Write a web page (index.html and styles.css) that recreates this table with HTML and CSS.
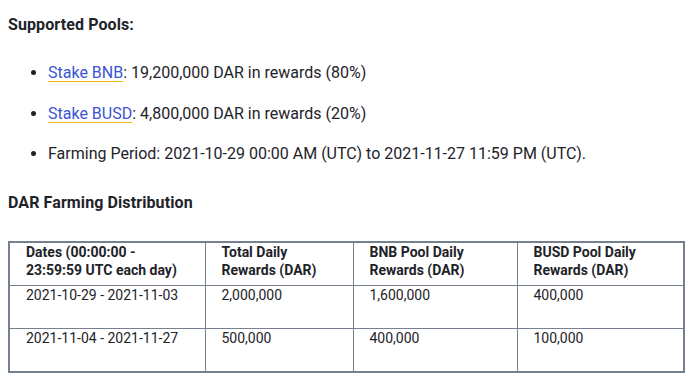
FILE: index.html
```html
<!DOCTYPE html>
<html>
<head>
<meta charset="utf-8">
<link rel="stylesheet" href="styles.css">
</head>
<body>
<div class="article">
  <p class="heading">Supported Pools:</p>
  <ul class="pools">
    <li><a class="link" href="#">Stake BNB</a>: 19,200,000 DAR in rewards (80%)</li>
    <li><a class="link" href="#">Stake BUSD</a>: 4,800,000 DAR in rewards (20%)</li>
    <li>Farming Period: 2021-10-29 00:00 AM (UTC) to 2021-11-27 11:59 PM (UTC).</li>
  </ul>
  <p class="heading heading-dist">DAR Farming Distribution</p>
  <table class="dist">
    <colgroup>
      <col class="c1"><col class="c2"><col class="c3"><col class="c4">
    </colgroup>
    <thead>
      <tr>
        <th>Dates (00:00:00 - 23:59:59 UTC each day)</th>
        <th>Total Daily Rewards (DAR)</th>
        <th>BNB Pool Daily Rewards (DAR)</th>
        <th>BUSD Pool Daily Rewards (DAR)</th>
      </tr>
    </thead>
    <tbody>
      <tr>
        <td>2021-10-29 - 2021-11-03</td>
        <td>2,000,000</td>
        <td>1,600,000</td>
        <td>400,000</td>
      </tr>
      <tr>
        <td>2021-11-04 - 2021-11-27</td>
        <td>500,000</td>
        <td>400,000</td>
        <td>100,000</td>
      </tr>
    </tbody>
  </table>
</div>
</body>
</html>
```

FILE: styles.css
```css
html, body {
  margin: 0;
  padding: 0;
  background: #ffffff;
}

.article {
  padding: 0 8px;
  font-family: Roboto, "Noto Sans", sans-serif;
  font-size: 16px;
  line-height: 24px;
  color: #1e2329;
}

.heading {
  margin: 13px 0 0;
  font-weight: 700;
  letter-spacing: 0.1px;
}

.pools {
  margin: 24px 0 0;
  padding-left: 40px;
}

.pools li {
  margin-bottom: 16.5px;
}

.pools li:last-child {
  margin-bottom: 0;
}

.link {
  color: #3a55d4;
  text-decoration: underline;
  text-decoration-color: #f0b90b;
  text-underline-offset: 3px;
  text-decoration-thickness: 1px;
}

.heading-dist {
  margin-top: 25px;
}

.dist {
  margin-top: 26px;
  width: 675px;
  table-layout: fixed;
  border-collapse: collapse;
  border: 2px solid #76808f;
  font-size: 14px;
  line-height: 18px;
}

.c1 { width: 196px; }
.c2 { width: 148px; }
.c3 { width: 164px; }
.c4 { width: 167px; }

.dist th,
.dist td {
  border: 1px solid #76808f;
  padding: 0 16px;
  text-align: left;
  vertical-align: top;
}

.dist th {
  font-weight: 700;
  padding-bottom: 6px;
}

.dist td {
  font-weight: 400;
  padding-bottom: 24px;
}
```
